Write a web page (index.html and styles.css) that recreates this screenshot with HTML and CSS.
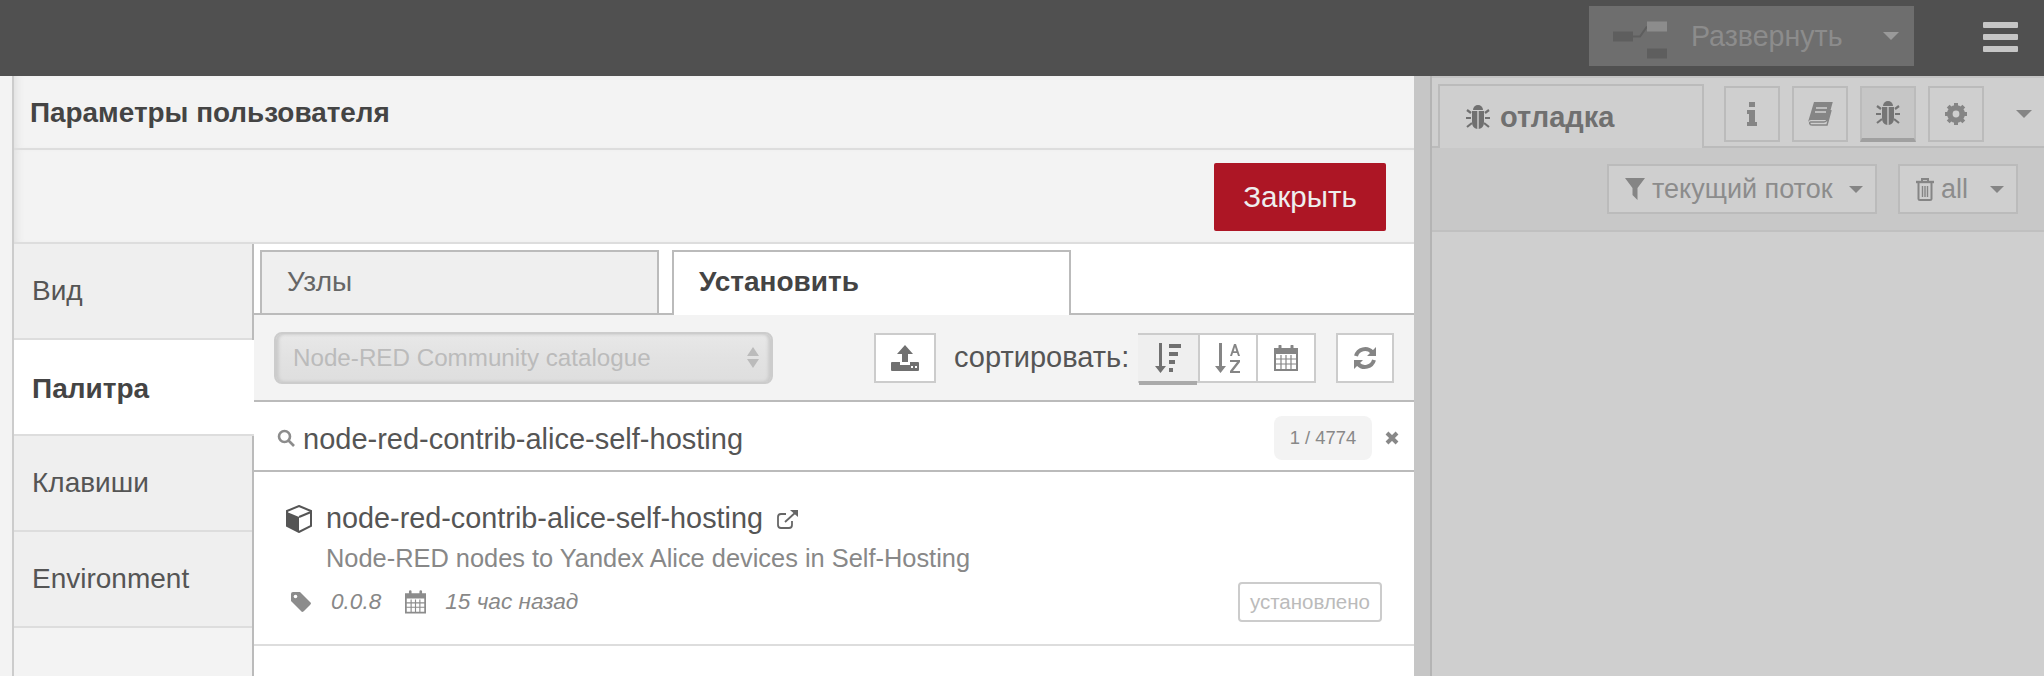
FILE: index.html
```html
<!DOCTYPE html>
<html lang="ru">
<head>
    <meta charset="UTF-8">
    <title>Node-RED</title>
    <link rel="stylesheet" href="styles.css">
</head>
<body>
    <header class="topbar">
        <div class="deploy">
            <svg class="deploy-icon" viewBox="0 0 54 30" width="54" height="30">
                <rect x="0" y="10" width="20" height="10" fill="#5e5e5e"/>
                <path d="M20 15 L27 15 L34 5" stroke="#5e5e5e" stroke-width="2" fill="none"/>
                <rect x="34" y="0" width="20" height="10" fill="#8c8c8c"/>
                <rect x="34" y="27" width="20" height="10" fill="#5e5e5e"/>
            </svg>
            <span class="deploy-label">Развернуть</span>
            <span class="caret deploy-caret"></span>
        </div>
        <div class="menu-btn"><span></span><span></span><span></span></div>
    </header>

    <div class="workspace">
        <div class="edge"></div>

        <section class="dialog">
            <div class="dialog-title">Параметры пользователя</div>
            <div class="dialog-buttons"><button class="close-btn">Закрыть</button></div>
            <div class="dialog-body">
                <nav class="sidebar">
                    <div class="side-tab">Вид</div>
                    <div class="side-tab active">Палитра</div>
                    <div class="side-tab">Клавиши</div>
                    <div class="side-tab">Environment</div>
                </nav>
                <div class="palette">
                    <div class="tabs">
                        <div class="tab">Узлы</div>
                        <div class="tab active">Установить</div>
                    </div>
                    <div class="toolbar">
                        <div class="catalogue">
                            <span>Node-RED Community catalogue</span>
                            <span class="updown"><i></i><i></i></span>
                        </div>
                        <div class="tool-btn upload-btn">
                            <svg viewBox="0 0 28 26" width="28" height="26" fill="#707070"><path d="M14 0 L22 9 H17 V17 H11 V9 H6 Z"/><path d="M1 17 H9 V20 H19 V17 H27 Q28 17 28 18 V25 Q28 26 27 26 H1 Q0 26 0 25 V18 Q0 17 1 17 Z"/><rect x="20" y="21" width="2" height="2" fill="#fff"/><rect x="24" y="21" width="2" height="2" fill="#fff"/></svg>
                        </div>
                        <span class="sort-label">сортировать:</span>
                        <div class="sort-group">
                            <div class="sort-btn selected">
                                <svg viewBox="0 0 26 30" width="26" height="30" fill="#707070"><path d="M4 0 H7 V23 H11 L5.5 30 L0 23 H4 Z"/><rect x="14" y="1" width="12" height="4"/><rect x="14" y="9" width="9" height="4"/><rect x="14" y="17" width="6" height="4"/><rect x="14" y="25" width="4" height="4"/></svg>
                            </div>
                            <div class="sort-btn">
                                <svg viewBox="0 0 26 30" width="26" height="30" fill="#858585"><path d="M4 0 H7 V23 H11 L5.5 30 L0 23 H4 Z"/><path fill-rule="evenodd" d="M15 13 L19 1 H21 L25 13 H23 L22 10 H18 L17 13 Z M18.7 8.2 H21.3 L20 4 Z"/><path d="M15 17 H25 V19 L18 28 H25 V30 H15 V28 L22 19 H15 Z"/></svg>
                            </div>
                            <div class="sort-btn">
                                <svg viewBox="0 0 24 26" width="24" height="26"><path d="M1 4 H23 V25 H1 Z" fill="none" stroke="#858585" stroke-width="2"/><path d="M1 4 H23 V9 H1 Z" fill="#858585"/><path d="M7 10 V25 M12 10 V25 M17 10 V25 M1 14 H23 M1 19 H23" stroke="#858585" stroke-width="1.2"/><path d="M6 1 V6 M18 1 V6" stroke="#858585" stroke-width="3" stroke-linecap="round"/></svg>
                            </div>
                        </div>
                        <div class="tool-btn refresh-btn">
                            <svg viewBox="0 0 24 24" width="24" height="26" fill="none" stroke="#858585" stroke-width="4"><path d="M3 10 A9.5 9.5 0 0 1 19 6"/><path d="M21 14 A9.5 9.5 0 0 1 5 18"/><path d="M23 1 V10 H14 Z M1 23 V14 H10 Z" fill="#858585" stroke="none"/></svg>
                        </div>
                    </div>
                    <div class="search">
                        <svg class="search-icon" viewBox="0 0 18 18" width="18" height="18" fill="none" stroke="#8c8c8c" stroke-width="2.6"><circle cx="7.5" cy="7.5" r="5.5"/><path d="M11.5 11.5 L17 17"/></svg>
                        <span class="search-text">node-red-contrib-alice-self-hosting</span>
                        <span class="count">1 / 4774</span>
                        <svg class="clear" viewBox="0 0 14 14" width="14" height="14" stroke="#888" stroke-width="4"><path d="M2 2 L12 12 M12 2 L2 12"/></svg>
                    </div>
                    <div class="result">
                        <div class="result-name">
                            <svg viewBox="0 0 26 28" width="26" height="28"><path d="M13 1 L25 6 V21 L13 27 L1 21 V6 Z" fill="#fff" stroke="#555" stroke-width="2"/><path d="M1 7 L13 12 V27 L1 21 Z" fill="#555"/><path d="M13 12 L25 7" stroke="#555" stroke-width="2"/></svg>
                            <span>node-red-contrib-alice-self-hosting</span>
                            <svg class="ext" viewBox="0 0 22 20" width="22" height="20" fill="none" stroke="#666" stroke-width="1.8"><path d="M15 12 V16 Q15 19 12 19 H4 Q1 19 1 16 V8 Q1 5 4 5 H9"/><path d="M8 13 L19 3"/><path d="M13 1 H21 V8 Z" fill="#666" stroke="none"/></svg>
                        </div>
                        <div class="result-desc">Node-RED nodes to Yandex Alice devices in Self-Hosting</div>
                        <div class="result-meta">
                            <svg viewBox="0 0 20 20" width="20" height="20" fill="#8c8c8c"><path d="M0 2 Q0 0 2 0 H9 L20 11 Q20 12 19 13 L13 19 Q12 20 11 20 L0 9 Z"/><circle cx="4.5" cy="4.5" r="1.8" fill="#fff"/></svg>
                            <span class="version">0.0.8</span>
                            <svg class="meta-cal" viewBox="0 0 24 26" width="21" height="24"><path d="M1 4 H23 V25 H1 Z" fill="none" stroke="#8c8c8c" stroke-width="2"/><path d="M1 4 H23 V9 H1 Z" fill="#8c8c8c"/><path d="M7 10 V25 M12 10 V25 M17 10 V25 M1 14 H23 M1 19 H23" stroke="#8c8c8c" stroke-width="1.3"/><path d="M6 1 V6 M18 1 V6" stroke="#8c8c8c" stroke-width="3" stroke-linecap="round"/></svg>
                            <span class="updated">15 час назад</span>
                            <span class="installed">установлено</span>
                        </div>
                    </div>
                </div>
            </div>
        </section>

        <div class="resizer"></div>

        <aside class="panel">
            <div class="panel-tabs">
                <div class="panel-tab">
                    <svg viewBox="0 0 24 26" width="24" height="26" fill="#707070"><path d="M7 6 A5 5 0 0 1 17 6 Z"/><path d="M6 7 H11.3 V25 Q6 24 6 18 Z M12.7 7 H18 V18 Q18 24 12.7 25 Z"/><path d="M5 9 L1 6 M19 9 L23 6 M5 14 H0 M19 14 H24 M6 19 L1 23 M18 19 L23 23" stroke="#707070" stroke-width="2.2"/></svg>
                    <span>отладка</span>
                </div>
                <div class="panel-btn">
                    <svg viewBox="0 0 12 24" width="12" height="24" fill="#858585"><rect x="3" y="0" width="6" height="5"/><path d="M1 8 H9 V20 H11 V24 H1 V20 H3 V12 H1 Z"/></svg>
                </div>
                <div class="panel-btn">
                    <svg viewBox="0 0 26 24" width="26" height="24"><path d="M7 0 H25 L20 18 Q19 20 17 20 H4 Q2 20 3 22 Q3 23 5 23 H20 L24 8" fill="none" stroke="#858585" stroke-width="1.5"/><path d="M7 0 H25 L20 18 H4 Q2 18 1 20 Z" fill="#858585"/><path d="M9 6 H20 M8 10 H19" stroke="#cfcfcf" stroke-width="1.4"/></svg>
                </div>
                <div class="panel-btn selected">
                    <svg viewBox="0 0 24 26" width="24" height="26" fill="#757575"><path d="M7 6 A5 5 0 0 1 17 6 Z"/><path d="M6 7 H11.3 V25 Q6 24 6 18 Z M12.7 7 H18 V18 Q18 24 12.7 25 Z"/><path d="M5 9 L1 6 M19 9 L23 6 M5 14 H0 M19 14 H24 M6 19 L1 23 M18 19 L23 23" stroke="#757575" stroke-width="2.2"/></svg>
                </div>
                <div class="panel-btn">
                    <svg viewBox="0 0 24 24" width="24" height="24"><circle cx="12" cy="12" r="6.5" fill="none" stroke="#858585" stroke-width="5"/><path d="M12 1 V23 M1 12 H23 M4.2 4.2 L19.8 19.8 M19.8 4.2 L4.2 19.8" stroke="#858585" stroke-width="4"/><circle cx="12" cy="12" r="3.4" fill="#cfcfcf"/></svg>
                </div>
                <span class="caret panel-caret"></span>
            </div>
            <div class="panel-toolbar">
                <div class="filter-btn">
                    <svg viewBox="0 0 20 22" width="20" height="22" fill="#858585"><path d="M0 0 H20 L12.5 10 V22 L7.5 17 V10 Z"/></svg>
                    <span>текущий поток</span>
                    <span class="caret small-caret"></span>
                </div>
                <div class="filter-btn all-btn">
                    <svg viewBox="0 0 18 24" width="18" height="24" fill="none" stroke="#858585" stroke-width="2"><path d="M0 5 H18" stroke-width="2.4"/><path d="M6 5 V2 H12 V5"/><path d="M2.5 6 V22 Q2.5 23 4 23 H14 Q15.5 23 15.5 22 V6"/><path d="M6.5 9 V20 M9 9 V20 M11.5 9 V20" stroke-width="1.4"/></svg>
                    <span>all</span>
                    <span class="caret small-caret"></span>
                </div>
            </div>
        </aside>
    </div>
</body>
</html>
```

FILE: styles.css
```css
* {
    box-sizing: border-box;
}

html, body {
    margin: 0;
    height: 676px;
    overflow: hidden;
}

body {
    font-family: "Liberation Sans", Arial, sans-serif;
    color: #555;
    background-color: #cfcfcf;
}

svg {
    flex-shrink: 0;
    display: block;
}

.caret {
    width: 0;
    height: 0;
    border-left: 8px solid transparent;
    border-right: 8px solid transparent;
    border-top: 8px solid #858585;
}

/* top bar */
.topbar {
    height: 76px;
    background-color: #505050;
    display: flex;
    align-items: flex-start;
    justify-content: flex-end;
    padding: 6px 26px 0 0;
    gap: 69px;
}

.deploy {
    width: 325px;
    height: 60px;
    background-color: #6e6e6e;
    display: flex;
    align-items: center;
    padding: 0 15px 0 24px;
    color: #8c8c8c;
    font-size: 28.6px;
}

.deploy-icon {
    height: 37px;
    overflow: visible;
}

.deploy-label {
    margin-left: 24px;
    flex: 1;
}

.deploy-caret {
    border-top-color: #9a9a9a;
}

.menu-btn {
    width: 35px;
    margin-top: 16px;
    display: flex;
    flex-direction: column;
    gap: 6px;
}

.menu-btn span {
    height: 6px;
    border-radius: 1px;
    background-color: #c6c6c6;
}

/* page below the bar */
.workspace {
    height: 600px;
    display: flex;
}

.edge {
    width: 14px;
    background-color: #f3f3f3;
    border-right: 2px solid #ccc;
}

.dialog {
    width: 1400px;
    background-color: #fff;
    display: flex;
    flex-direction: column;
}

.dialog-title {
    height: 74px;
    background-color: #f3f3f3;
    border-bottom: 2px solid #ddd;
    box-shadow: inset 8px 0 8px -6px #ddd;
    padding: 0 0 0 16px;
    font-size: 27.9px;
    font-weight: bold;
    line-height: 74px;
    color: #444;
}

.dialog-buttons {
    height: 94px;
    background-color: #f3f3f3;
    border-bottom: 2px solid #ddd;
    box-shadow: inset 8px 0 8px -6px #ddd;
    display: flex;
    justify-content: flex-end;
    align-items: flex-start;
    padding: 13px 28px 0 0;
}

.close-btn {
    width: 172px;
    height: 68px;
    border: none;
    border-radius: 2px;
    background-color: #ad1625;
    color: #eee;
    font-family: inherit;
    font-size: 29.5px;
}

.dialog-body {
    flex: 1;
    display: flex;
}

.sidebar {
    width: 240px;
    background-color: #f3f3f3;
    border-right: 2px solid #bbb;
    flex-shrink: 0;
}

.side-tab {
    height: 96px;
    line-height: 94px;
    padding-left: 18px;
    font-size: 28px;
    background-color: #efefef;
    border-bottom: 2px solid #ddd;
    color: #555;
}

.side-tab.active {
    background-color: #fff;
    font-weight: bold;
    color: #444;
    margin-right: -2px;
    padding-top: 2px;
    position: relative;
}

.palette {
    flex: 1;
    display: flex;
    flex-direction: column;
    min-width: 0;
}

.tabs {
    height: 71px;
    display: flex;
    gap: 13px;
    padding: 6px 0 0 6px;
    border-bottom: 2px solid #bbb;
}

.tab {
    width: 399px;
    height: 63px;
    background-color: #efefef;
    border: 2px solid #bbb;
    border-bottom: none;
    padding-left: 25px;
    line-height: 60px;
    font-size: 28px;
    color: #666;
}

.tab.active {
    background-color: #fff;
    font-weight: bold;
    color: #444;
    height: 65px;
}

.toolbar {
    height: 87px;
    background-color: #f3f3f3;
    border-bottom: 2px solid #bbb;
    display: flex;
    align-items: center;
    padding: 0 20px 0 20px;
}

.catalogue {
    width: 499px;
    height: 52px;
    border: 2px solid #ccc;
    border-radius: 8px;
    background: linear-gradient(#e8e8e8, #e2e2e2 50%, #dedede);
    box-shadow: inset 3px 0 3px #ccc, inset -3px 0 3px #ccc;
    display: flex;
    align-items: center;
    justify-content: space-between;
    padding: 0 12px 0 17px;
    font-size: 24.2px;
    color: #bbb;
}

.updown {
    display: flex;
    flex-direction: column;
    gap: 3px;
}

.updown i {
    width: 0;
    height: 0;
    border-left: 6px solid transparent;
    border-right: 6px solid transparent;
    border-bottom: 9px solid #bbb;
}

.updown i + i {
    border-bottom: none;
    border-top: 9px solid #bbb;
}

.tool-btn {
    height: 50px;
    background-color: #fff;
    border: 2px solid #ccc;
    display: flex;
    align-items: center;
    justify-content: center;
}

.upload-btn {
    width: 62px;
    margin-left: 101px;
}

.sort-label {
    margin-left: 18px;
    width: 175px;
    font-size: 29px;
    color: #555;
    white-space: nowrap;
}

.sort-group {
    display: flex;
    height: 50px;
    margin-left: 9px;
    border: 2px solid #ccc;
    background-color: #fff;
}

.sort-btn {
    width: 58px;
    display: flex;
    align-items: center;
    justify-content: center;
    border-left: 2px solid #ccc;
}

.sort-btn.selected {
    width: 60px;
    margin-left: -2px;
    background-color: #efefef;
    border-left: none;
    box-shadow: 0 5px 0 -1px #aaa;
}

.refresh-btn {
    width: 58px;
    margin-left: 20px;
}

.search {
    height: 70px;
    display: flex;
    align-items: center;
    padding: 4px 15px 0 23px;
    border-bottom: 2px solid #bbb;
}

.search-icon {
    margin-right: 8px;
}

.search-text {
    flex: 1;
    margin-top: 2px;
    font-size: 29px;
    color: #555;
}

.count {
    width: 98px;
    height: 44px;
    line-height: 44px;
    text-align: center;
    background-color: #f3f3f3;
    border-radius: 8px;
    font-size: 18.4px;
    color: #888;
}

.clear {
    margin-left: 13px;
}

.result {
    height: 174px;
    border-bottom: 2px solid #ddd;
    padding: 30px 32px 0 32px;
}

.result-name {
    display: flex;
    align-items: center;
    gap: 14px;
    font-size: 28.8px;
    color: #555;
}

.result-desc {
    margin: 9px 0 0 40px;
    font-size: 25.4px;
    color: #888;
}

.result-meta {
    display: flex;
    align-items: center;
    margin: 9px 0 0 5px;
    font-size: 22.6px;
    font-style: italic;
    color: #888;
}

.version {
    margin-left: 20px;
}

.meta-cal {
    margin-left: 24px;
}

.updated {
    margin-left: 19px;
    flex: 1;
}

.installed {
    border: 2px solid #ccc;
    border-radius: 4px;
    padding: 6px 10px;
    font-size: 20.5px;
    font-style: normal;
    color: #bbb;
}

/* resizer and right hand panel */
.resizer {
    width: 18px;
    background-color: #c6c6c6;
    border-right: 2px solid #b4b4b4;
}

.panel {
    flex: 1;
    background-color: #cfcfcf;
    border-top: 2px solid #c4c4c4;
}

.panel-tabs {
    height: 70px;
    display: flex;
    align-items: flex-start;
    padding-top: 6px;
    border-bottom: 2px solid #bbb;
}

.panel-tab {
    width: 266px;
    height: 64px;
    margin-left: 6px;
    border: 2px solid #bbb;
    border-bottom: none;
    background-color: #cfcfcf;
    display: flex;
    align-items: center;
    gap: 10px;
    padding-left: 26px;
    font-size: 29px;
    font-weight: bold;
    color: #707070;
}

.panel-btn {
    width: 56px;
    height: 56px;
    margin: 2px 0 0 12px;
    border: 2px solid #bbb;
    display: flex;
    align-items: center;
    justify-content: center;
}

.panel-tab + .panel-btn {
    margin-left: 20px;
}

.panel-btn.selected {
    background-color: #c6c6c6;
    border-bottom: 4px solid #a0a0a0;
}

.panel-caret {
    margin: 26px 0 0 32px;
}

.panel-toolbar {
    height: 84px;
    background-color: #c8c8c8;
    border-bottom: 2px solid #c0c0c0;
    display: flex;
    justify-content: flex-end;
    align-items: center;
    gap: 21px;
    padding-right: 26px;
}

.filter-btn {
    width: 270px;
    height: 50px;
    border: 2px solid #bbb;
    background-color: #cfcfcf;
    display: flex;
    align-items: center;
    padding: 0 12px 0 16px;
    gap: 7px;
    font-size: 27px;
    color: #8c8c8c;
}

.filter-btn span:not(.caret) {
    flex: 1;
    white-space: nowrap;
}

.all-btn {
    width: 120px;
}

.small-caret {
    border-left-width: 7px;
    border-right-width: 7px;
    border-top-width: 7px;
}
```
